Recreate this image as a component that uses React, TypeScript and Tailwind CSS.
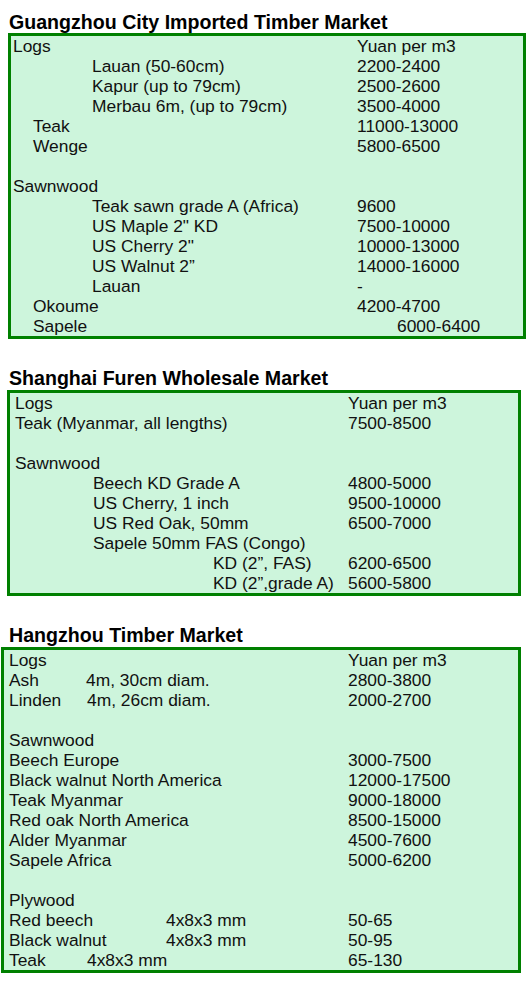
type Row = {
  label?: string;
  pad?: string;
  sub?: string;
  subPad?: string;
  price?: string;
  pricePad?: string;
};

type Market = {
  title: string;
  boxClass: string;
  labelWidth: string;
  rows: Row[];
};

const MARKETS: Market[] = [
  {
    title: "Guangzhou City Imported Timber Market",
    boxClass: "ml-[8px] w-[518px] mt-0",
    labelWidth: "w-[346px]",
    rows: [
      { label: "Logs", pad: "pl-[2px]", price: "Yuan per m3" },
      { label: "Lauan (50-60cm)", pad: "pl-[81px]", price: "2200-2400" },
      { label: "Kapur (up to 79cm)", pad: "pl-[81px]", price: "2500-2600" },
      { label: "Merbau 6m, (up to 79cm)", pad: "pl-[81px]", price: "3500-4000" },
      { label: "Teak", pad: "pl-[22px]", price: "11000-13000" },
      { label: "Wenge", pad: "pl-[22px]", price: "5800-6500" },
      {},
      { label: "Sawnwood", pad: "pl-[2px]" },
      { label: "Teak sawn grade A (Africa)", pad: "pl-[81px]", price: "9600" },
      { label: "US Maple 2\" KD", pad: "pl-[81px]", price: "7500-10000" },
      { label: "US Cherry 2\"", pad: "pl-[81px]", price: "10000-13000" },
      { label: "US Walnut 2\u201d", pad: "pl-[81px]", price: "14000-16000" },
      { label: "Lauan", pad: "pl-[81px]", price: "-" },
      { label: "Okoume", pad: "pl-[22px]", price: "4200-4700" },
      { label: "Sapele", pad: "pl-[22px]", price: "6000-6400", pricePad: "pl-[40px]" },
    ],
  },
  {
    title: "Shanghai Furen Wholesale Market",
    boxClass: "ml-[7px] w-[514px] mt-[1px]",
    labelWidth: "w-[338px]",
    rows: [
      { label: "Logs", pad: "pl-[5px]", price: "Yuan per m3" },
      { label: "Teak (Myanmar, all lengths)", pad: "pl-[5px]", price: "7500-8500" },
      {},
      { label: "Sawnwood", pad: "pl-[5px]" },
      { label: "Beech KD Grade A", pad: "pl-[83px]", price: "4800-5000" },
      { label: "US Cherry, 1 inch", pad: "pl-[83px]", price: "9500-10000" },
      { label: "US Red Oak, 50mm", pad: "pl-[83px]", price: "6500-7000" },
      { label: "Sapele 50mm FAS (Congo)", pad: "pl-[83px]" },
      { label: "KD (2\u201d, FAS)", pad: "pl-[203px]", price: "6200-6500" },
      { label: "KD (2\u201d,grade A)", pad: "pl-[203px]", price: "5600-5800" },
    ],
  },
  {
    title: "Hangzhou Timber Market",
    boxClass: "ml-[1px] w-[520px] mt-[1px]",
    labelWidth: "w-[344px]",
    rows: [
      { label: "Logs", pad: "pl-[5px]", price: "Yuan per m3" },
      { label: "Ash", pad: "pl-[5px]", sub: "4m, 30cm diam.", subPad: "w-[82px]", price: "2800-3800" },
      { label: "Linden", pad: "pl-[5px]", sub: "4m, 26cm diam.", subPad: "w-[83px]", price: "2000-2700" },
      {},
      { label: "Sawnwood", pad: "pl-[5px]" },
      { label: "Beech Europe", pad: "pl-[5px]", price: "3000-7500" },
      { label: "Black walnut North America", pad: "pl-[5px]", price: "12000-17500" },
      { label: "Teak Myanmar", pad: "pl-[5px]", price: "9000-18000" },
      { label: "Red oak North America", pad: "pl-[5px]", price: "8500-15000" },
      { label: "Alder Myanmar", pad: "pl-[5px]", price: "4500-7600" },
      { label: "Sapele Africa", pad: "pl-[5px]", price: "5000-6200" },
      {},
      { label: "Plywood", pad: "pl-[5px]" },
      { label: "Red beech", pad: "pl-[5px]", sub: "4x8x3 mm", subPad: "w-[162px]", price: "50-65" },
      { label: "Black walnut", pad: "pl-[5px]", sub: "4x8x3 mm", subPad: "w-[162px]", price: "50-95" },
      { label: "Teak", pad: "pl-[5px]", sub: "4x8x3 mm", subPad: "w-[83px]", price: "65-130" },
    ],
  },
];

const PriceRow = ({ row, labelWidth }: { row: Row; labelWidth: string }) => {
  return (
    <div className="flex h-5 leading-5 whitespace-nowrap">
      <div className={`${labelWidth} shrink-0 ${row.pad ?? ""} flex`}>
        {row.sub ? (
          <>
            <span className={`${row.subPad} shrink-0 -ml-[5px] pl-[5px]`}>{row.label}</span>
            <span>{row.sub}</span>
          </>
        ) : (
          <span>{row.label}</span>
        )}
      </div>
      <div className={row.pricePad ?? ""}>{row.price}</div>
    </div>
  );
};

const App = () => {
  return (
    <div
      className="w-[528px] min-h-[981px] bg-white pt-[11px] text-[#111]"
      style={{ fontFamily: '"Liberation Sans", Arial, sans-serif' }}
    >
      {MARKETS.map((market, index) => (
        <section key={index} className={index === 0 ? "" : "mt-[28px]"}>
          <h2 className="pl-[9px] h-[22px] leading-[22px] text-[19.6px] font-bold text-black">
            {market.title}
          </h2>
          <div
            className={`${market.boxClass} border-[3px] border-[#008000] bg-[#cdf5dc] text-[17.4px]`}
          >
            {market.rows.map((row, i) => (
              <PriceRow key={i} row={row} labelWidth={market.labelWidth} />
            ))}
          </div>
        </section>
      ))}
    </div>
  );
};

export default App;
